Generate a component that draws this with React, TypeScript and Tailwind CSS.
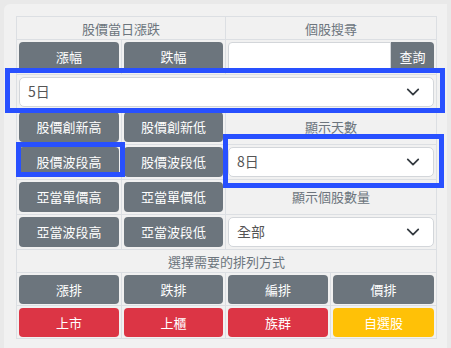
import React from 'react'

type BtnColor = 'gray' | 'red' | 'yellow'

const btnColors: Record<BtnColor, string> = {
  gray: 'bg-[#6c757d]',
  red: 'bg-[#dc3545]',
  yellow: 'bg-[#ffc107]',
}

const cell = 'border border-[#dcdfe3] px-[2px] py-[2px] align-middle'
const tight = 'border border-[#dcdfe3] px-[2px] pb-[1px] pt-[2px]'
const head =
  'border border-[#dcdfe3] p-0 text-center text-[13px] leading-[21px] text-[#6c757d]'

const Btn: React.FC<{ label: string; color?: BtnColor; h?: string }> = ({
  label,
  color = 'gray',
  h = 'h-[29.5px]',
}) => (
  <button
    className={`${btnColors[color]} ${h} flex w-full items-center justify-center rounded-[4px] text-[13px] leading-none text-white`}
  >
    {label}
  </button>
)

const Chevron = () => (
  <svg width="14" height="14" viewBox="0 0 16 16" fill="none">
    <path
      d="M2 5l6 6 6-6"
      stroke="#343a40"
      strokeWidth="2"
      strokeLinecap="round"
      strokeLinejoin="round"
    />
  </svg>
)

const Select: React.FC<{ value: string }> = ({ value }) => (
  <div className="flex h-[30.5px] w-full items-center justify-between rounded-[5px] border border-[#d3d6da] bg-white pl-[8px] pr-[13px] text-[14px] text-[#555]">
    <span>{value}</span>
    <Chevron />
  </div>
)

const Label: React.FC<{ text: string }> = ({ text }) => (
  <td colSpan={2} className={`${cell} text-center text-[13px] text-[#6c757d]`}>
    {text}
  </td>
)

const sideRows: { left: [string, string]; right: React.ReactNode }[] = [
  { left: ['股價創新高', '股價創新低'], right: <Label text="顯示天數" /> },
  {
    left: ['股價波段高', '股價波段低'],
    right: (
      <td colSpan={2} className={cell}>
        <Select value="8日" />
      </td>
    ),
  },
  { left: ['亞當單價高', '亞當單價低'], right: <Label text="顯示個股數量" /> },
  {
    left: ['亞當波段高', '亞當波段低'],
    right: (
      <td colSpan={2} className={cell}>
        <Select value="全部" />
      </td>
    ),
  },
]

export default function App() {
  return (
    <div className="relative h-[348px] w-[451px] overflow-hidden bg-[#e9e9e9] font-['Noto_Sans_CJK_TC',sans-serif]">
      <div className="ml-[4px] mt-[4px] h-[344px] w-[443px] rounded-tl-[6px] bg-[#f1f1f1] pl-[12px] pt-[12px]">
        <table className="w-[420px] table-fixed border-collapse">
          <colgroup>
            <col className="w-[105px]" />
            <col className="w-[104px]" />
            <col className="w-[105px]" />
            <col className="w-[106px]" />
          </colgroup>
          <tbody>
            <tr className="h-[23px]">
              <td colSpan={2} className={head}>
                股價當日漲跌
              </td>
              <td colSpan={2} className={head}>
                個股搜尋
              </td>
            </tr>
            <tr>
              <td className={cell}>
                <Btn label="漲幅" />
              </td>
              <td className={cell}>
                <Btn label="跌幅" />
              </td>
              <td colSpan={2} className={cell}>
                <div className="flex h-[29.5px]">
                  <div className="flex-1 rounded-l-[4px] border border-[#d3d6da] bg-white" />
                  <button className="w-[43px] rounded-r-[4px] bg-[#6c757d] text-[13px] text-white">
                    查詢
                  </button>
                </div>
              </td>
            </tr>
            <tr>
              <td colSpan={4} className={cell}>
                <Select value="5日" />
              </td>
            </tr>
            {sideRows.map(row => (
              <tr key={row.left[0]}>
                <td className={cell}>
                  <Btn label={row.left[0]} />
                </td>
                <td className={cell}>
                  <Btn label={row.left[1]} />
                </td>
                {row.right}
              </tr>
            ))}
            <tr className="h-[23px]">
              <td colSpan={4} className={head}>
                選擇需要的排列方式
              </td>
            </tr>
            <tr>
              {['漲排', '跌排', '編排', '價排'].map(label => (
                <td key={label} className={tight}>
                  <Btn label={label} h="h-[29px]" />
                </td>
              ))}
            </tr>
            <tr>
              <td className={tight}>
                <Btn label="上市" color="red" h="h-[29px]" />
              </td>
              <td className={tight}>
                <Btn label="上櫃" color="red" h="h-[29px]" />
              </td>
              <td className={tight}>
                <Btn label="族群" color="red" h="h-[29px]" />
              </td>
              <td className={tight}>
                <Btn label="自選股" color="yellow" h="h-[29px]" />
              </td>
            </tr>
          </tbody>
        </table>
      </div>

      {/* highlight boxes */}
      <div className="pointer-events-none absolute left-[5px] top-[68px] h-[45px] w-[440px] border-[5px] border-[#2850ff]" />
      <div className="pointer-events-none absolute left-[16px] top-[142px] h-[35px] w-[109px] border-[5px] border-[#2850ff]" />
      <div className="pointer-events-none absolute left-[223px] top-[134px] h-[54px] w-[221px] border-[5px] border-[#2850ff]" />
    </div>
  )
}
